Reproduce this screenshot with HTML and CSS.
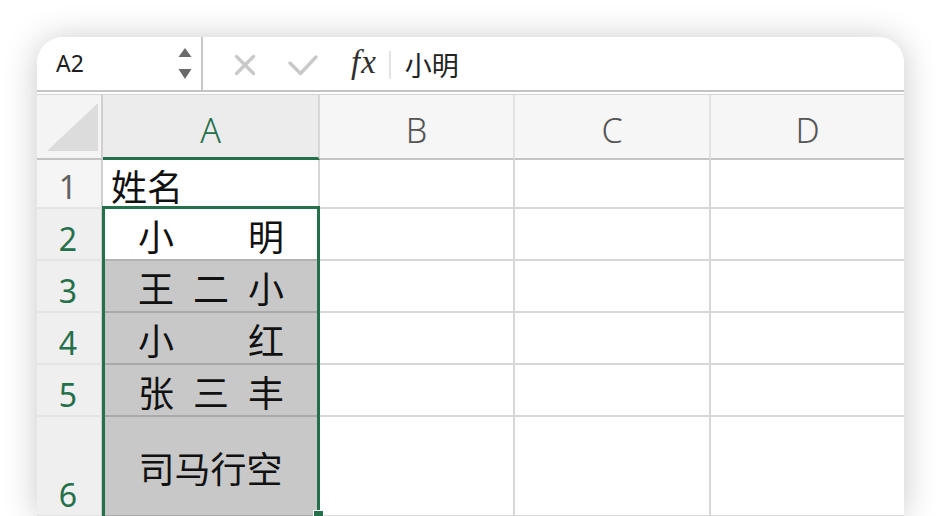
FILE: index.html
```html
<!DOCTYPE html>
<html lang="zh-CN">
<head>
<meta charset="utf-8">
<title>Sheet</title>
<link rel="stylesheet" href="styles.css">
</head>
<body>
<div class="window">
  <div class="fbar">
    <div class="namebox">
      <span class="ref">A2</span>
      <svg class="spin" width="14" height="32" viewBox="0 0 14 32">
        <polygon points="7,0 13.5,9 0.5,9" fill="#6a6a6a"/>
        <polygon points="0.5,21 13.5,21 7,31" fill="#6a6a6a"/>
      </svg>
    </div>
    <div class="fbtns">
      <svg class="ic-x" width="22" height="22" viewBox="0 0 22 22">
        <path d="M2.5 2.5 L19.5 19.5 M19.5 2.5 L2.5 19.5" stroke="#c9c9c9" stroke-width="3.4" stroke-linecap="round"/>
      </svg>
      <svg class="ic-check" width="30" height="22" viewBox="0 0 30 22">
        <path d="M2 9 L12.5 19.5 L28 3" fill="none" stroke="#c9c9c9" stroke-width="3.4" stroke-linecap="round" stroke-linejoin="round"/>
      </svg>
      <span class="fx">fx</span>
      <span class="sep"></span>
      <span class="fval">小明</span>
    </div>
  </div>
  <div class="fbar-rule"></div>
  <div class="sheet">
    <div class="corner"><span class="tri"></span></div>
    <div class="hd sel">A</div>
    <div class="hd">B</div>
    <div class="hd">C</div>
    <div class="hd last">D</div>

    <div class="rh">1</div>
    <div class="c left">姓名</div>
    <div class="c"></div>
    <div class="c"></div>
    <div class="c last"></div>

    <div class="rh sel">2</div>
    <div class="c dist top-sel">
      <span>小</span><span>明</span>
    </div>
    <div class="c"></div>
    <div class="c"></div>
    <div class="c last"></div>

    <div class="rh sel">3</div>
    <div class="c dist fill"><span>王</span><span>二</span><span>小</span></div>
    <div class="c"></div>
    <div class="c"></div>
    <div class="c last"></div>

    <div class="rh sel">4</div>
    <div class="c dist fill"><span>小</span><span>红</span></div>
    <div class="c"></div>
    <div class="c"></div>
    <div class="c last"></div>

    <div class="rh sel">5</div>
    <div class="c dist fill"><span>张</span><span>三</span><span>丰</span></div>
    <div class="c"></div>
    <div class="c"></div>
    <div class="c last"></div>

    <div class="rh sel">6</div>
    <div class="c center fill">司马行空</div>
    <div class="c"></div>
    <div class="c"></div>
    <div class="c last"></div>

    <div class="selection"><span class="handle"></span></div>
  </div>
</div>
</body>
</html>
```

FILE: styles.css
```css
html, body {
  margin: 0;
  padding: 0;
  background: #ffffff;
}
body {
  height: 516px;
  overflow: hidden;
  padding-top: 37px;
  box-sizing: border-box;
  font-family: "Noto Sans", "Noto Sans CJK SC", sans-serif;
}
.window {
  margin-left: 37px;
  width: 867px;
  height: 479px;
  background: #ffffff;
  border-radius: 26px 26px 0 0;
  box-shadow: 0 2px 34px rgba(0, 0, 0, 0.22);
  overflow: hidden;
}

/* formula bar */
.fbar {
  height: 53px;
  border-bottom: 2px solid #c4c4c4;
  display: flex;
  background: #ffffff;
}
.fbar-rule {
  margin-top: 2px;
  height: 1px;
  background: #d4d4d4;
}
.namebox {
  width: 166px;
  border-right: 2px solid #c8c8c8;
  display: flex;
  align-items: center;
  justify-content: space-between;
  padding: 0 9px 0 19px;
  box-sizing: border-box;
}
.ref {
  font-family: "Noto Sans", sans-serif;
  font-size: 23px;
  color: #1e1e1e;
  line-height: 1;
  margin-top: -1px;
}
.spin {
  display: block;
  margin-top: 1px;
}
.fbtns {
  display: flex;
  align-items: center;
  padding-left: 31px;
  flex: 1;
}
.ic-x {
  display: block;
  margin-top: 2px;
}
.ic-check {
  display: block;
  margin-left: 32px;
  margin-top: 2px;
}
.fx {
  margin-left: 33px;
  font-family: "Liberation Serif", "DejaVu Serif", serif;
  font-style: italic;
  font-size: 33px;
  letter-spacing: 1px;
  color: #2e2e2e;
  line-height: 1;
  margin-top: -2px;
}
.sep {
  width: 2px;
  height: 28px;
  background: #e4e4e4;
  margin-left: 12px;
  margin-top: 2px;
}
.fval {
  margin-left: 14px;
  font-family: "Noto Sans CJK SC", sans-serif;
  font-size: 27px;
  color: #222222;
  line-height: 1;
  margin-top: 1px;
}

/* sheet grid */
.sheet {
  position: relative;
  display: grid;
  grid-template-columns: 66px 217px 195px 196px 193px;
  grid-template-rows: 65px 49px 52px 52px 52px 52px 100px;
}
.sheet > div {
  box-sizing: border-box;
}
.corner {
  background: #f4f4f4;
  border-right: 2px solid #cfcfcf;
  border-bottom: 2px solid #c4c4c4;
  display: flex;
  justify-content: flex-end;
  align-items: flex-end;
  padding: 0 3px 7px 0;
}
.tri {
  display: block;
  width: 51px;
  height: 48px;
  background: #dcdcdc;
  clip-path: polygon(100% 0, 100% 100%, 0 100%);
}
.hd {
  background: #f6f6f6;
  border-right: 2px solid #e2e2e2;
  border-bottom: 2px solid #c4c4c4;
  display: flex;
  justify-content: center;
  align-items: flex-start;
  padding-top: 18px;
  font-size: 34px;
  font-weight: 350;
  line-height: 1;
  color: #555555;
}
.hd.sel {
  background: #ececec;
  color: #23704a;
  border-bottom: 3px solid #23704a;
  border-right-color: #d8d8d8;
}
.hd.last, .c.last {
  border-right: none;
}
.rh {
  background: #f5f5f5;
  border-right: 2px solid #cfcfcf;
  border-bottom: 2px solid #e4e4e4;
  display: flex;
  justify-content: center;
  align-items: flex-end;
  padding: 0 2px 4px 0;
  font-size: 32px;
  font-weight: 380;
  line-height: 1;
  color: #626262;
}
.rh.sel {
  background: #efefef;
  color: #23704a;
}
.c {
  background: #ffffff;
  border-right: 2px solid #d7d7d7;
  border-bottom: 2px solid #d7d7d7;
  display: flex;
  align-items: center;
  font-family: "Noto Sans CJK SC", sans-serif;
  font-size: 36px;
  line-height: 1;
  color: #111111;
}
.c.left {
  padding-left: 8px;
  padding-top: 2px;
}
.c.dist {
  justify-content: space-between;
  padding: 2px 34px 0 35px;
}
.c.center {
  justify-content: center;
  padding-top: 2px;
}
.c.top-sel {
  border-bottom-color: #b2b2b2;
}
.c.fill {
  background: #c8c8c8;
  border-bottom-color: #a9a9a9;
}

/* selection outline (overlay) */
.selection {
  position: absolute;
  left: 65px;
  top: 111px;
  width: 218px;
  height: 313px;
  border: 3px solid #23704a;
  box-sizing: border-box;
  pointer-events: none;
}
.handle {
  position: absolute;
  right: -7px;
  bottom: -5px;
  width: 9px;
  height: 9px;
  background: #23704a;
  border: 1px solid #ffffff;
}
```
